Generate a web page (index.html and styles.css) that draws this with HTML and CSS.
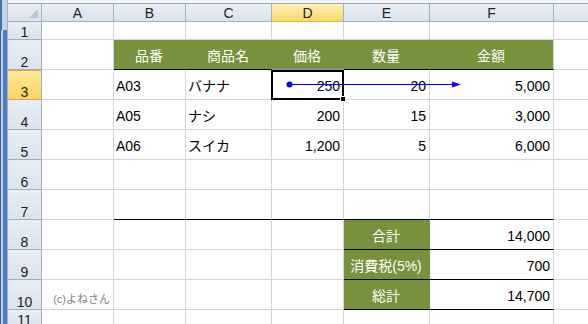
FILE: index.html
```html
<!DOCTYPE html>
<html lang="ja">
<head>
    <meta charset="UTF-8">
    <title>商品一覧</title>
    <link rel="stylesheet" href="styles.css">
</head>
<body>

    <div class="window">
        <!-- 左側の枠 -->
        <div class="frame">
            <div class="frame-top"></div>
        </div>

        <div class="sheet">
            <div class="topbar"></div>

            <div class="grid">
                <!-- 列見出し -->
                <div class="col corner"></div>
                <div class="col">A</div>
                <div class="col">B</div>
                <div class="col">C</div>
                <div class="col on">D</div>
                <div class="col">E</div>
                <div class="col">F</div>
                <div class="col">G</div>

                <!-- 1 -->
                <div class="row">1</div>
                <div class="cell"></div><div class="cell"></div><div class="cell"></div>
                <div class="cell"></div><div class="cell"></div><div class="cell"></div><div class="cell"></div>

                <!-- 2 -->
                <div class="row">2</div>
                <div class="cell"></div>
                <div class="cell hd">品番</div>
                <div class="cell hd">商品名</div>
                <div class="cell hd over">価格</div>
                <div class="cell hd">数量</div>
                <div class="cell hd last">金額</div>
                <div class="cell"></div>

                <!-- 3 -->
                <div class="row on">3</div>
                <div class="cell"></div>
                <div class="cell">A03</div>
                <div class="cell">バナナ</div>
                <div class="cell num active">250</div>
                <div class="cell num">20</div>
                <div class="cell num">5,000</div>
                <div class="cell"></div>

                <!-- 4 -->
                <div class="row">4</div>
                <div class="cell"></div>
                <div class="cell">A05</div>
                <div class="cell">ナシ</div>
                <div class="cell num">200</div>
                <div class="cell num">15</div>
                <div class="cell num">3,000</div>
                <div class="cell"></div>

                <!-- 5 -->
                <div class="row">5</div>
                <div class="cell"></div>
                <div class="cell">A06</div>
                <div class="cell">スイカ</div>
                <div class="cell num">1,200</div>
                <div class="cell num">5</div>
                <div class="cell num">6,000</div>
                <div class="cell"></div>

                <!-- 6 -->
                <div class="row">6</div>
                <div class="cell"></div><div class="cell"></div><div class="cell"></div>
                <div class="cell"></div><div class="cell"></div><div class="cell"></div><div class="cell"></div>

                <!-- 7 -->
                <div class="row">7</div>
                <div class="cell"></div>
                <div class="cell rule"></div>
                <div class="cell rule"></div>
                <div class="cell rule"></div>
                <div class="cell rule"></div>
                <div class="cell rule"></div>
                <div class="cell"></div>

                <!-- 8 -->
                <div class="row">8</div>
                <div class="cell"></div><div class="cell"></div><div class="cell"></div><div class="cell"></div>
                <div class="cell hd">合計</div>
                <div class="cell num rule">14,000</div>
                <div class="cell"></div>

                <!-- 9 -->
                <div class="row">9</div>
                <div class="cell"></div><div class="cell"></div><div class="cell"></div><div class="cell"></div>
                <div class="cell hd">消費税(5%)</div>
                <div class="cell num rule">700</div>
                <div class="cell"></div>

                <!-- 10 -->
                <div class="row">10</div>
                <div class="cell num credit">(c)よねさん</div>
                <div class="cell"></div><div class="cell"></div><div class="cell"></div>
                <div class="cell hd">総計</div>
                <div class="cell num rule">14,700</div>
                <div class="cell"></div>

                <!-- 11 -->
                <div class="row">11</div>
                <div class="cell"></div><div class="cell"></div><div class="cell"></div>
                <div class="cell"></div><div class="cell"></div><div class="cell"></div><div class="cell"></div>
            </div>

            <!-- 参照先トレースの矢印 -->
            <svg class="trace" width="580" height="324">
                <line x1="281.5" y1="84.5" x2="445" y2="84.5" stroke="#0000ff" stroke-width="1"/>
                <circle cx="281.5" cy="84.5" r="3" fill="#0000ff"/>
                <polygon points="444,81.5 453,84.5 444,87.5" fill="#0000ff"/>
            </svg>
        </div>
    </div>

</body>
</html>
```

FILE: styles.css
```css
body {
    margin: 0;
    padding: 0;
    font-family: "Liberation Sans", "Noto Sans CJK JP", sans-serif;
    background: #fff;
    overflow: hidden;
}

.window {
    display: flex;
    width: 588px;
    height: 324px;
    overflow: hidden;
}

/* 左の青い枠 */
.frame {
    width: 8px;
    flex-shrink: 0;
    background: linear-gradient(to right, #3a5d9c 0 1px, #c5d2e6 1px 3px, #4f7fc8 3px 7px, #a4b2c6 7px 8px);
}

.frame-top {
    height: 30px;
    background: linear-gradient(to right, #4a6ea8 0 2px, #c9d2df 2px 7px, #a4b2c6 7px 8px);
}

.sheet {
    position: relative;
    flex: 1;
    overflow: hidden;
}

.topbar {
    height: 4px;
    box-sizing: border-box;
    background: #f2f4f7;
    border-bottom: 1px solid #9eabbc;
}

.grid {
    display: grid;
    grid-template-columns: 34px 72px 72px 86px 72px 86px 124px 84px;
    grid-template-rows: 18px 18px repeat(9, 30px) 18px;
    width: 630px;
}

/* 見出し (列・行) */
.col,
.row {
    box-sizing: border-box;
    background: linear-gradient(#e9eef5, #dbe3ee);
    border-right: 1px solid #9eb0c6;
    border-bottom: 1px solid #9eb0c6;
    color: #222;
    font-size: 14px;
    display: flex;
    justify-content: center;
}

.col {
    align-items: center;
    line-height: 16px;
}

.row {
    align-items: flex-end;
    line-height: 14px;
}

.corner {
    position: relative;
}

.corner::after {
    content: '';
    position: absolute;
    right: 3px;
    bottom: 3px;
    border-left: 9px solid transparent;
    border-bottom: 9px solid #bcc6d4;
}

.col.on {
    background: linear-gradient(#fff0b8, #fdd66c);
    border-bottom-color: #f0b040;
}

.row.on {
    background: linear-gradient(#ffe99a, #fdd463);
    border-bottom-color: #e3a33a;
    box-shadow: inset 0 1px #e3a33a;
}

/* セル */
.cell {
    box-sizing: border-box;
    border-right: 1px solid #d4d4d4;
    border-bottom: 1px solid #d4d4d4;
    display: flex;
    align-items: flex-end;
    padding: 0 3px 5px 2px;
    font-size: 14px;
    line-height: 16px;
    color: #000;
    white-space: nowrap;
}

.num {
    justify-content: flex-end;
}

.hd {
    background: #76923c;
    color: #fff;
    justify-content: center;
    border-right-color: #76923c;
    border-bottom-color: #000;
}

.hd.last {
    border-right-color: #d4d4d4;
}

.hd.over {
    border-bottom-color: #9a8fe8;
}

.rule {
    border-bottom-color: #000;
}

.credit {
    font-size: 11px;
    line-height: 14px;
    color: #808080;
    padding-bottom: 3px;
}

/* 選択中のセル */
.active {
    position: relative;
}

.active::before {
    content: '';
    position: absolute;
    left: -1px;
    right: -1px;
    top: 0;
    bottom: -1px;
    border: 2px solid #000;
}

.active::after {
    content: '';
    position: absolute;
    right: -3px;
    bottom: -3px;
    width: 4px;
    height: 4px;
    background: #000;
    border: 1px solid #fff;
}

.trace {
    position: absolute;
    top: 0;
    left: 0;
    pointer-events: none;
}
```
